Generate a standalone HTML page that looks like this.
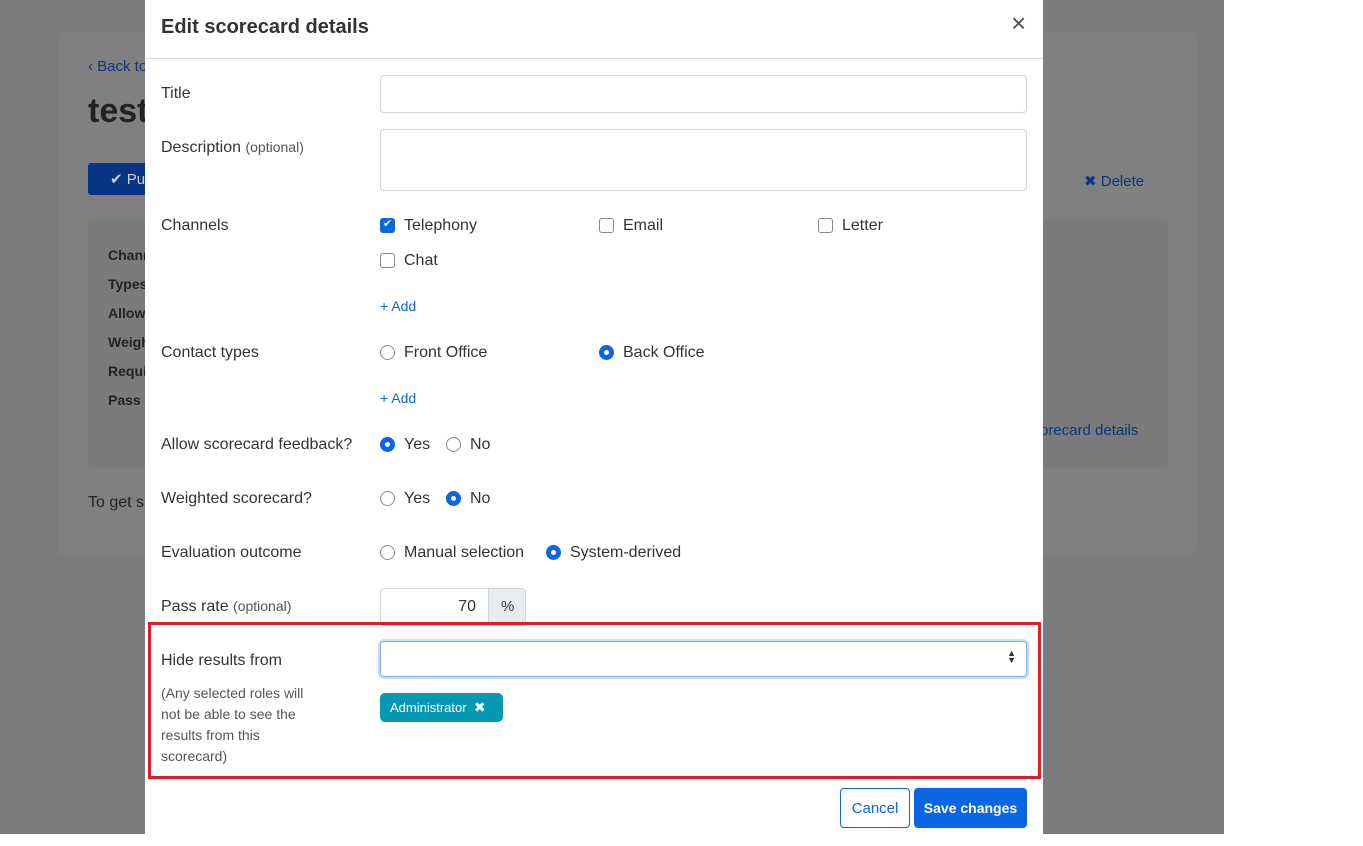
<!DOCTYPE html>
<html><head><meta charset="utf-8"><style>
*{box-sizing:border-box;margin:0;padding:0}
body{width:1363px;height:834px;overflow:hidden;background:#fff;font-family:"Liberation Sans","DejaVu Sans",sans-serif;color:#333;position:relative}
.ov{position:absolute;left:0;top:0;width:1224px;height:834px;background:#7b7c7e}
.card{position:absolute;left:58px;top:32px;width:1139px;height:523px;background:#808080;border-radius:6px}
.inner{position:absolute;left:88px;top:219px;width:1080px;height:249px;background:#7b7b7b;border-radius:4px}
.a{position:absolute;white-space:nowrap}
.modal{position:absolute;left:145px;top:-4px;width:898px;height:850px;background:#fff;border-radius:5px}
.hdr{position:absolute;left:0;top:0;width:898px;height:63px;border-bottom:1px solid #dee2e6}
.lbl{position:absolute;left:16px;font-size:16px;color:#333}
.inp{position:absolute;border:1px solid #ced4da;border-radius:4px;background:#fff}
.cb{position:absolute;width:15px;height:15px;border:1px solid #8a8a8a;border-radius:3px;background:#fff}
.cb.on{background:#0b66e4;border-color:#0b66e4}
.rd{position:absolute;width:15px;height:15px;border:1px solid #8a8a8a;border-radius:50%;background:#fff}
.rd.on{border:5px solid #0b66e4}
.t{position:absolute;font-size:16px;color:#333;white-space:nowrap}
.add{position:absolute;font-size:14px;color:#0b66e4}
</style></head><body>
<div class="ov"></div>
<div class="card"></div>
<div class="a" style="left:88px;top:58px;font-size:15px;color:#0a3580">‹ Back to</div>
<div class="a" style="left:88px;top:92px;font-size:34px;font-weight:bold;color:#222">test</div>
<div class="a" style="left:88px;top:163px;width:70px;height:32px;background:#0a3584;border-radius:3px;color:#ccd;font-size:15px;padding:7px 0 0 22px">✔ Pu</div>
<div class="a" style="left:1084px;top:172px;font-size:15px;color:#0a3580">✖ Delete</div>
<div class="inner"></div>
<div class="a" style="left:108px;top:241px;font-size:14px;font-weight:bold;color:#222;line-height:29px">Chann<br>Types<br>Allow<br>Weigh<br>Requi<br>Pass r</div>
<div class="a" style="left:1040px;top:422px;font-size:15px;color:#0a3580">orecard details</div>
<div class="a" style="left:88px;top:494px;font-size:16px;color:#222">To get s</div>

<div class="modal">
<div class="hdr"><div class="a" style="left:16px;top:20px;font-size:20px;font-weight:bold;color:#333">Edit scorecard details</div>
<div class="a" style="left:866px;top:12px;font-size:26px;color:#555">×</div></div>
</div>
<div class="lbl" style="top:85px;left:161px">Title</div>
<div class="inp" style="left:380px;top:75px;width:647px;height:38px"></div>
<div class="lbl" style="top:139px;left:161px">Description <span style="font-size:14px;color:#555">(optional)</span></div>
<div class="inp" style="left:380px;top:129px;width:647px;height:62px"></div>
<div class="lbl" style="top:217px;left:161px">Channels</div>
<div class="cb on" style="left:380px;top:218px"><span style="position:absolute;left:2px;top:-2px;color:#fff;font-size:11px">✔</span></div><div class="t" style="left:404px;top:217px">Telephony</div>
<div class="cb" style="left:599px;top:218px"></div><div class="t" style="left:623px;top:217px">Email</div>
<div class="cb" style="left:818px;top:218px"></div><div class="t" style="left:842px;top:217px">Letter</div>
<div class="cb" style="left:380px;top:253px"></div><div class="t" style="left:404px;top:252px">Chat</div>
<div class="add" style="left:380px;top:298px">+ Add</div>
<div class="lbl" style="top:344px;left:161px">Contact types</div>
<div class="rd" style="left:380px;top:345px"></div><div class="t" style="left:404px;top:344px">Front Office</div>
<div class="rd on" style="left:599px;top:345px"></div><div class="t" style="left:623px;top:344px">Back Office</div>
<div class="add" style="left:380px;top:390px">+ Add</div>
<div class="lbl" style="top:436px;left:161px">Allow scorecard feedback?</div>
<div class="rd on" style="left:380px;top:437px"></div><div class="t" style="left:404px;top:436px">Yes</div>
<div class="rd" style="left:446px;top:437px"></div><div class="t" style="left:470px;top:436px">No</div>
<div class="lbl" style="top:490px;left:161px">Weighted scorecard?</div>
<div class="rd" style="left:380px;top:491px"></div><div class="t" style="left:404px;top:490px">Yes</div>
<div class="rd on" style="left:446px;top:491px"></div><div class="t" style="left:470px;top:490px">No</div>
<div class="lbl" style="top:544px;left:161px">Evaluation outcome</div>
<div class="rd" style="left:380px;top:545px"></div><div class="t" style="left:404px;top:544px">Manual selection</div>
<div class="rd on" style="left:546px;top:545px"></div><div class="t" style="left:570px;top:544px">System-derived</div>
<div class="lbl" style="top:598px;left:161px">Pass rate <span style="font-size:14px;color:#555">(optional)</span></div>
<div class="inp" style="left:380px;top:588px;width:146px;height:38px;overflow:hidden">
<div class="a" style="left:0;top:0;width:107px;height:38px;text-align:right;padding:9px 12px 0 0;font-size:16px">70</div>
<div class="a" style="left:107px;top:0;width:40px;height:38px;background:#e9ecef;border-left:1px solid #ced4da;padding:9px 0 0 12px;font-size:15px">%</div></div>
<div class="a" style="left:148px;top:622px;width:893px;height:157px;border:3px solid #e31b23"></div>
<div class="lbl" style="top:652px;left:161px">Hide results from</div>
<div class="a" style="left:161px;top:683px;font-size:14px;color:#555;line-height:21px">(Any selected roles will<br>not be able to see the<br>results from this<br>scorecard)</div>
<div class="inp" style="left:380px;top:641px;width:647px;height:36px;border-color:#80b0f5;box-shadow:0 0 0 2px #c8dcfa"><span style="position:absolute;right:10px;top:8px;font-size:9px;line-height:7px;color:#333">▲<br>▼</span></div>
<div class="a" style="left:380px;top:693px;width:123px;height:29px;background:#0499b0;border-radius:5px;color:#fff;font-size:13px;padding:6px 0 0 10px">Administrator&nbsp; <b style="font-size:14px">✖</b></div>
<div class="a" style="left:840px;top:788px;width:70px;height:40px;border:1px solid #0b66e4;border-radius:4px;color:#0b66e4;font-size:15px;padding:11px 0 0 0;text-align:center">Cancel</div>
<div class="a" style="left:914px;top:788px;width:113px;height:40px;background:#0b66e4;border-radius:4px;color:#fff;font-size:14px;font-weight:bold;padding:12px 0 0 0;text-align:center">Save changes</div>
</body></html>
